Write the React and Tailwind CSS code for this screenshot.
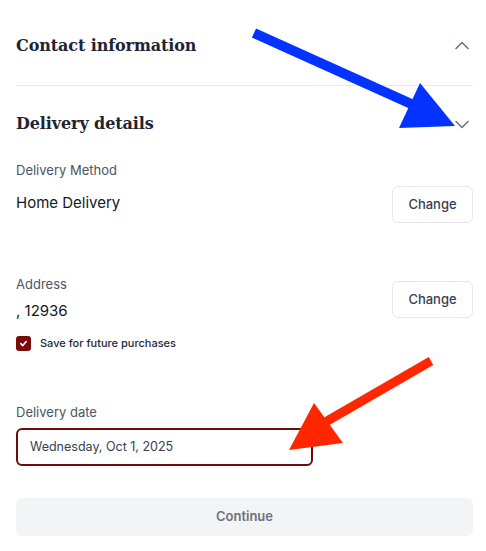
import React from "react";

function ChevronUp() {
  return (
    <svg width="16" height="16" viewBox="0 0 16 16" fill="none" stroke="#6b7280" strokeWidth="1.6" strokeLinecap="round" strokeLinejoin="round">
      <path d="M2 10.5 L8 4.5 L14 10.5" />
    </svg>
  );
}
function ChevronDown() {
  return (
    <svg width="16" height="16" viewBox="0 0 16 16" fill="none" stroke="#6b7280" strokeWidth="1.6" strokeLinecap="round" strokeLinejoin="round">
      <path d="M2 5.5 L8 11.5 L14 5.5" />
    </svg>
  );
}

export default function App() {
  const sans = { fontFamily: "Inter, 'Noto Sans', sans-serif" };
  const serif = { fontFamily: "'DejaVu Serif', serif" };
  return (
    <div className="relative w-[486px] h-[551px] bg-white overflow-hidden" style={sans}>
      <div className="pl-4 pr-[13px] pt-[28px]">
        <div className="flex items-center justify-between h-[36px] pr-[3px]">
          <h2 className="text-[16px] font-bold text-[#1f2433] tracking-[-0.1px]" style={serif}>Contact information</h2>
          <ChevronUp />
        </div>
        <div className="mt-[21px] border-t border-[#e5e7eb]" />
        <div className="mt-[20px] flex items-center justify-between h-[36px] pr-[3px]">
          <h2 className="text-[16px] font-bold text-[#1f2433] tracking-[-0.1px]" style={serif}>Delivery details</h2>
          <ChevronDown />
        </div>

        <div className="mt-[18px] flex items-start justify-between">
          <div>
            <div className="text-[13px] text-[#4b5563] leading-[20px]">Delivery Method</div>
            <div className="mt-[13px] text-[15px] text-[#111827] leading-[20px]">Home Delivery</div>
          </div>
          <button className="mt-[26px] w-[81px] h-[37px] rounded-[6px] border border-[#e5e7eb] text-[13px] font-medium text-[#374151] bg-white">Change</button>
        </div>

        <div className="mt-[51px] flex items-start justify-between">
          <div>
            <div className="text-[13px] text-[#4b5563] leading-[20px]">Address</div>
            <div className="mt-[7px] text-[15px] text-[#111827] leading-[20px]">, 12936</div>
          </div>
          <button className="mt-[7px] w-[81px] h-[37px] rounded-[6px] border border-[#e5e7eb] text-[13px] font-medium text-[#374151] bg-white">Change</button>
        </div>

        <div className="mt-[15px] flex items-center gap-[9px] h-[15px]">
          <div className="w-[15px] h-[15px] rounded-[3px] bg-[#7a0b0b] flex items-center justify-center">
            <svg width="9" height="9" viewBox="0 0 10 10" fill="none" stroke="white" strokeWidth="1.8" strokeLinecap="round" strokeLinejoin="round">
              <path d="M2 5.2 L4.2 7.3 L8 2.8" />
            </svg>
          </div>
          <span className="text-[11px] font-medium text-[#1f2937]">Save for future purchases</span>
        </div>

        <div className="mt-[51px] text-[13px] text-[#4b5563] leading-[20px]">Delivery date</div>
        <div className="mt-[6px] w-[297px] h-[38px] rounded-[6px] border-2 border-[#6e0b0b] flex items-center pl-[12px] text-[12.5px] text-[#374151]">
          Wednesday, Oct 1, 2025
        </div>

        <button className="mt-[32px] w-full h-[38px] rounded-[6px] bg-[#f3f4f6] text-[13px] font-semibold text-[#6b7280]">Continue</button>
      </div>

      <svg className="absolute inset-0 pointer-events-none" width="486" height="551" viewBox="0 0 486 551">
        <line x1="254" y1="33" x2="418" y2="107" stroke="#0433ff" strokeWidth="10" />
        <polygon points="420,83 399,128 455,126" fill="#0433ff" />
        <line x1="431" y1="361" x2="322" y2="424" stroke="#ff2600" strokeWidth="9" />
        <polygon points="314,403 289,450 343,443" fill="#ff2600" />
      </svg>
    </div>
  );
}
